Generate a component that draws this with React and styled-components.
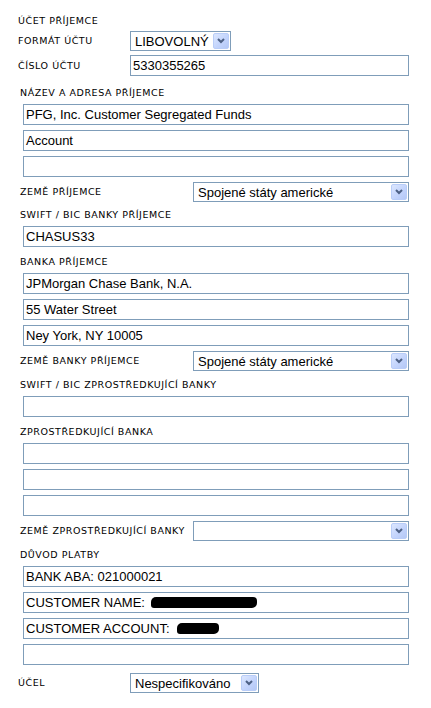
import React from 'react';
import styled, { createGlobalStyle } from 'styled-components';

const GlobalStyle = createGlobalStyle`
  body {
    margin: 0;
    background: #ffffff;
  }
`;

const Page = styled.div`
  width: 431px;
  height: 708px;
  padding-top: 15px;
  box-sizing: border-box;
  font-family: "Liberation Sans", Arial, sans-serif;
  color: #000;
`;

const Heading = styled.div`
  margin-left: 18px;
  height: 12px;
  line-height: 12px;
  font: 9.5px "DejaVu Sans", Verdana, sans-serif;
  letter-spacing: 0.55px;
`;

const FormGrid = styled.div`
  display: grid;
  grid-template-columns: 112px 279px;
  row-gap: 4px;
  align-items: center;
  margin: ${p => p.$top || 4}px 0 0 18px;
`;

const Label = styled.div`
  font: 9.5px "DejaVu Sans", Verdana, sans-serif;
  letter-spacing: 0.55px;
  line-height: 12px;
  white-space: nowrap;
`;

const SectionTitle = styled(Label)`
  margin-left: 20px;
  padding: ${p => p.$top}px 0 5px;
  height: 12px;
`;

const FieldStack = styled.div`
  display: flex;
  flex-direction: column;
  gap: 5px;
  margin-left: 23px;
  width: 386px;
`;

const Field = styled.div`
  box-sizing: border-box;
  height: 21px;
  width: ${p => (p.$w ? `${p.$w}px` : '100%')};
  border: 1px solid #7f9db9;
  background: #fff;
  padding-left: 2px;
  display: flex;
  align-items: center;
  font-size: 13px;
  white-space: pre;
`;

const Blob = styled.span`
  display: inline-block;
  width: ${p => p.$w}px;
  height: 11px;
  margin-left: ${p => p.$ml || 2}px;
  background: #000;
  border-radius: 5px 4px 5px 3px;
`;

const SelectBox = styled.div`
  box-sizing: border-box;
  height: 20px;
  width: ${p => p.$w}px;
  border: 1px solid #7f9db9;
  background: #fff;
  display: flex;
  align-items: center;
  padding: 0 1px 0 4px;
  font-size: 13px;
`;

const SelectValue = styled.span`
  flex: 1;
  white-space: nowrap;
  overflow: hidden;
`;

const ArrowButton = styled.span`
  box-sizing: border-box;
  width: 16px;
  height: 16px;
  border: 1px solid #b9cdf8;
  border-radius: 2px;
  background: linear-gradient(135deg, #dce7fe 0%, #c3d4fc 55%, #b4c8f6 100%);
  display: flex;
  align-items: center;
  justify-content: center;
`;

const CountryRow = styled.div`
  display: flex;
  align-items: center;
  margin: 5px 0 0 20px;
  width: 389px;
`;

const CountryLabel = styled(Label)`
  flex: 1;
`;

const Chevron = () => (
  <svg width="8" height="6" viewBox="0 0 8 6">
    <polyline points="1,1 4,4 7,1" fill="none" stroke="#4d6185" strokeWidth="2" />
  </svg>
);

const Select = ({ value, w }) => (
  <SelectBox $w={w}>
    <SelectValue>{value}</SelectValue>
    <ArrowButton><Chevron /></ArrowButton>
  </SelectBox>
);

const App = () => {
  return (
    <Page>
      <GlobalStyle />
      <Heading>ÚČET PŘÍJEMCE</Heading>
      <FormGrid>
        <Label>FORMÁT ÚČTU</Label>
        <Select value="LIBOVOLNÝ" w={101} />
        <Label>ČÍSLO ÚČTU</Label>
        <Field $w={279}>5330355265</Field>
      </FormGrid>

      <SectionTitle $top={11}>NÁZEV A ADRESA PŘÍJEMCE</SectionTitle>
      <FieldStack>
        <Field>PFG, Inc. Customer Segregated Funds</Field>
        <Field>Account</Field>
        <Field />
      </FieldStack>
      <CountryRow>
        <CountryLabel>ZEMĚ PŘÍJEMCE</CountryLabel>
        <Select value="Spojené státy americké" w={216} />
      </CountryRow>

      <SectionTitle $top={7}>SWIFT / BIC BANKY PŘÍJEMCE</SectionTitle>
      <FieldStack>
        <Field>CHASUS33</Field>
      </FieldStack>

      <SectionTitle $top={9}>BANKA PŘÍJEMCE</SectionTitle>
      <FieldStack>
        <Field>JPMorgan Chase Bank, N.A.</Field>
        <Field>55 Water Street</Field>
        <Field>Ney York, NY 10005</Field>
      </FieldStack>
      <CountryRow>
        <CountryLabel>ZEMĚ BANKY PŘÍJEMCE</CountryLabel>
        <Select value="Spojené státy americké" w={216} />
      </CountryRow>

      <SectionTitle $top={8}>SWIFT / BIC ZPROSTŘEDKUJÍCÍ BANKY</SectionTitle>
      <FieldStack>
        <Field />
      </FieldStack>

      <SectionTitle $top={9}>ZPROSTŘEDKUJÍCÍ BANKA</SectionTitle>
      <FieldStack>
        <Field />
        <Field />
        <Field />
      </FieldStack>
      <CountryRow>
        <CountryLabel>ZEMĚ ZPROSTŘEDKUJÍCÍ BANKY</CountryLabel>
        <Select value="" w={216} />
      </CountryRow>

      <SectionTitle $top={8}>DŮVOD PLATBY</SectionTitle>
      <FieldStack>
        <Field>BANK ABA: 021000021</Field>
        <Field>CUSTOMER NAME: <Blob $w={106} $ml={0} /></Field>
        <Field>CUSTOMER ACCOUNT:<Blob $w={42} $ml={7} /></Field>
        <Field />
      </FieldStack>

      <FormGrid $top={8}>
        <Label>ÚČEL</Label>
        <Select value="Nespecifikováno" w={129} />
      </FormGrid>
    </Page>
  );
};

export default App;
